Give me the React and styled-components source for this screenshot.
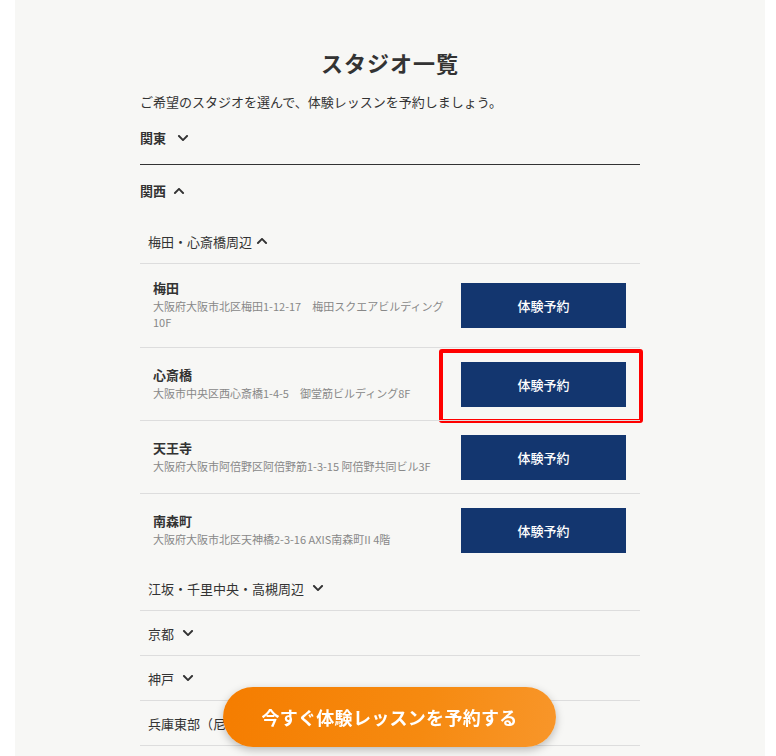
import * as React from 'react';
import styled, { createGlobalStyle } from 'styled-components';
import { FaChevronDown, FaChevronUp } from 'react-icons/fa';

const GlobalStyle = createGlobalStyle`
  html, body {
    margin: 0;
    padding: 0;
    background: #ffffff;
  }
  body {
    font-family: "Noto Sans CJK JP", "Noto Sans", sans-serif;
    color: #333333;
  }
`;

const Panel = styled.div`
  margin: 0 11px 0 15px;
  min-height: 756px;
  background: #f7f7f5;
  padding-top: 45px;
  box-sizing: border-box;
`;

const Column = styled.div`
  width: 500px;
  margin: 0 auto;
`;

const Title = styled.h1`
  margin: 0;
  height: 34px;
  line-height: 34px;
  text-align: center;
  font-size: 22px;
  font-weight: 700;
  letter-spacing: 1px;
  color: #333333;
`;

const Lead = styled.p`
  margin: 13px 0 0;
  font-size: 13px;
  line-height: 20px;
`;

const RegionHeader = styled.div`
  display: flex;
  align-items: center;
  gap: ${props => props.open ? '7px' : '11px'};
  padding: 16px 0 ${props => props.open ? '18px' : '16px'};
  font-size: 13px;
  line-height: 20px;
  font-weight: 700;
  border-bottom: ${props => props.open ? 'none' : '1px solid #333333'};

  svg {
    font-size: 12px;
  }
`;

const AreaHeader = styled.div`
  display: flex;
  align-items: center;
  gap: ${props => props.open ? '4px' : '8px'};
  height: 44px;
  padding-left: 8px;
  font-size: 13px;
  border-bottom: 1px solid #dddddd;

  svg {
    font-size: 12px;
  }
`;

const StudioRow = styled.div`
  position: relative;
  display: flex;
  align-items: center;
  justify-content: space-between;
  min-height: 72px;
  padding: 0 14px 0 13px;

  & + & {
    border-top: 1px solid #dddddd;
  }
`;

const Info = styled.div`
  flex: 0 1 300px;
  padding: 14px 0 17px;
`;

const Name = styled.div`
  font-size: 13px;
  font-weight: 700;
  line-height: 20px;
`;

const Address = styled.div`
  font-size: 11px;
  line-height: 16px;
  color: #888888;
`;

const ReserveButton = styled.a`
  flex: 0 0 165px;
  height: 45px;
  display: flex;
  align-items: center;
  justify-content: center;
  background: #13366f;
  color: #ffffff;
  font-size: 13px;
  font-weight: 500;
  text-decoration: none;
`;

const Highlight = styled.span`
  position: absolute;
  top: 1px;
  right: -3px;
  width: 204px;
  height: 74px;
  box-sizing: border-box;
  border: 4px solid #ff0000;
  border-radius: 3px;
  pointer-events: none;
`;

const Cta = styled.a`
  position: fixed;
  left: 223px;
  bottom: 9px;
  width: 333px;
  height: 60px;
  border-radius: 30px;
  display: flex;
  align-items: center;
  justify-content: center;
  background: linear-gradient(100deg, #f57d00 0%, #f68a10 60%, #f8962a 100%);
  box-shadow: 0 3px 8px rgba(0, 0, 0, 0.25);
  color: #ffffff;
  font-size: 18px;
  font-weight: 700;
  letter-spacing: 0.3px;
  text-decoration: none;
`;

const studios = [
  { name: '梅田', address: '大阪府大阪市北区梅田1-12-17　梅田スクエアビルディング 10F' },
  { name: '心斎橋', address: '大阪市中央区西心斎橋1-4-5　御堂筋ビルディング8F', marked: true },
  { name: '天王寺', address: '大阪府大阪市阿倍野区阿倍野筋1-3-15 阿倍野共同ビル3F' },
  { name: '南森町', address: '大阪府大阪市北区天神橋2-3-16 AXIS南森町II 4階' },
];

const closedAreas = ['江坂・千里中央・高槻周辺', '京都', '神戸', '兵庫東部（尼崎・西宮・芦屋）'];

export default function App() {
  return (
    <>
      <GlobalStyle />
      <Panel>
        <Column>
          <Title>スタジオ一覧</Title>
          <Lead>ご希望のスタジオを選んで、体験レッスンを予約しましょう。</Lead>

          <RegionHeader>関東 <FaChevronDown /></RegionHeader>
          <RegionHeader open>関西 <FaChevronUp /></RegionHeader>

          <AreaHeader open>梅田・心斎橋周辺 <FaChevronUp /></AreaHeader>
          {studios.map((studio) => (
            <StudioRow key={studio.name}>
              <Info>
                <Name>{studio.name}</Name>
                <Address>{studio.address}</Address>
              </Info>
              <ReserveButton href="#">体験予約</ReserveButton>
              {studio.marked && <Highlight />}
            </StudioRow>
          ))}

          {closedAreas.map((area) => (
            <AreaHeader key={area}>{area} <FaChevronDown /></AreaHeader>
          ))}
        </Column>
      </Panel>
      <Cta href="#">今すぐ体験レッスンを予約する</Cta>
    </>
  );
}
